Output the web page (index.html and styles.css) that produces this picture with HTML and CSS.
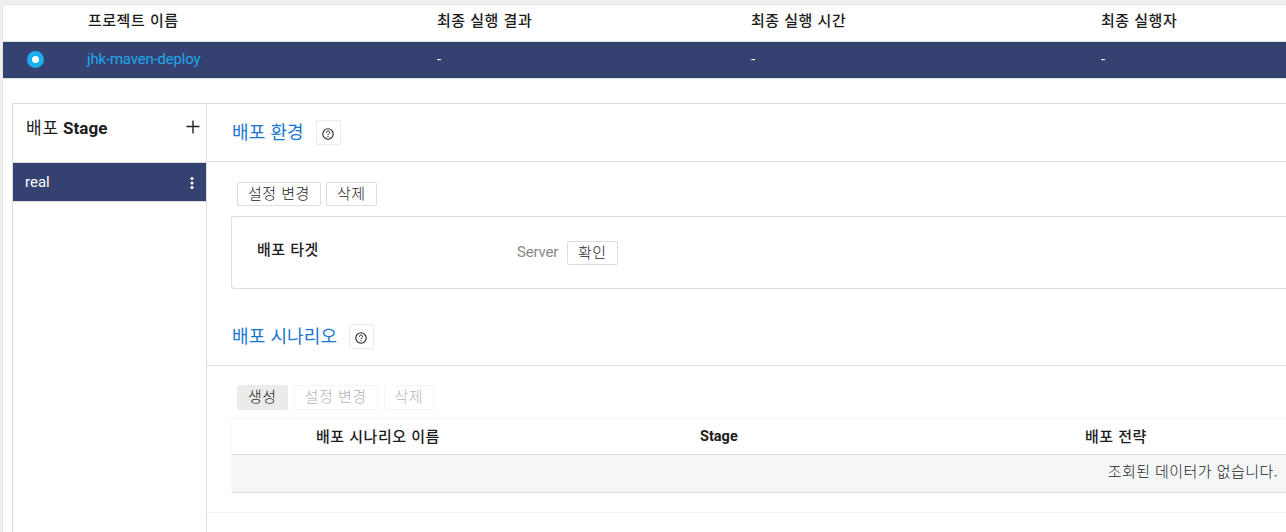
FILE: index.html
```
<!DOCTYPE html>
<html lang="ko">
<head>
<meta charset="utf-8">
<title>배포</title>
<link rel="stylesheet" href="styles.css">
</head>
<body>
<main class="page">
  <section class="projects">
    <div class="project-row project-head">
      <span></span><span class="ko first">프로젝트 이름</span><span class="ko">최종 실행 결과</span><span class="ko">최종 실행 시간</span><span class="ko">최종 실행자</span>
    </div>
    <div class="project-row project-selected">
      <span class="radio"></span><a class="project-link">jhk-maven-deploy</a><span>-</span><span>-</span><span>-</span>
    </div>
  </section>
  <section class="deploy">
    <aside class="stages">
      <header class="stages-head">
        <h2 class="stages-title"><span class="ko">배포</span> Stage</h2>
        <svg class="plus" width="14" height="14" viewBox="0 0 14 14"><path d="M7 .5v13M.5 6.5h13" stroke="#222" stroke-width="1.4" fill="none"/></svg>
      </header>
      <div class="stage">
        <span>real</span>
        <svg width="4" height="14" viewBox="0 0 4 14" fill="#fff"><circle cx="2" cy="2.5" r="1.6"/><circle cx="2" cy="7" r="1.6"/><circle cx="2" cy="11.5" r="1.6"/></svg>
      </div>
    </aside>
    <div class="content">
      <header class="section-head">
        <h3 class="section-title ko">배포 환경</h3>
        <button class="help"><svg width="12" height="12" viewBox="0 0 12 12" fill="none" stroke="#222"><circle cx="6" cy="6" r="5.2" stroke-width="1.1"/><path d="M4.4 4.8C4.4 2.4 7.6 2.5 7.6 4.6C7.6 5.7 6 5.8 6 7.2M6 8.1v1.2" stroke-width="1"/></svg></button>
      </header>
      <div class="section-body environment">
        <div class="toolbar"><button class="btn ko">설정 변경</button><button class="btn ko">삭제</button></div>
        <div class="target">
          <strong class="target-name ko">배포 타겟</strong>
          <span class="target-type">Server</span>
          <button class="btn ko">확인</button>
        </div>
      </div>
      <header class="section-head">
        <h3 class="section-title ko">배포 시나리오</h3>
        <button class="help"><svg width="12" height="12" viewBox="0 0 12 12" fill="none" stroke="#222"><circle cx="6" cy="6" r="5.2" stroke-width="1.1"/><path d="M4.4 4.8C4.4 2.4 7.6 2.5 7.6 4.6C7.6 5.7 6 5.8 6 7.2M6 8.1v1.2" stroke-width="1"/></svg></button>
      </header>
      <div class="section-body scenarios">
        <div class="toolbar"><button class="btn btn-active ko">생성</button><button class="btn btn-disabled ko">설정 변경</button><button class="btn btn-disabled ko">삭제</button></div>
        <div class="table">
          <div class="table-head"><span class="ko">배포 시나리오 이름</span><b>Stage</b><span class="ko">배포 전략</span></div>
          <div class="table-empty ko">조회된 데이터가 없습니다.</div>
        </div>
      </div>
    </div>
  </section>
</main>
</body>
</html>
```
FILE: styles.css
```
* { box-sizing: border-box; }
body {
  margin: 0;
  height: 532px;
  overflow: hidden;
  background: #efefef;
  color: #1c1c1c;
  font: 15px/20px Roboto, "Noto Sans CJK KR", sans-serif;
}
h2, h3 { margin: 0; }
button { font: inherit; color: inherit; padding: 0; }
.ko { font-family: "Noto Sans CJK KR", sans-serif; letter-spacing: .5px; white-space: nowrap; }
.page {
  margin: 4px 0 0 2px;
  height: 530px;
  border: 1px solid #e5e5e5;
  border-right: 0;
  border-radius: 3px 0 0 0;
  background: #fff;
}
.project-row {
  display: grid;
  grid-template-columns: 84px 350px 314px 350px 1fr;
  height: 37px;
  padding-top: 5px;
  border-bottom: 1px solid #e0e0e0;
}
.project-head { font-weight: 500; }
.first { padding-left: 1px; }
.project-selected { background: #354271; color: #fff; padding-top: 7px; }
.project-link { color: #1da6e9; letter-spacing: -.18px; }
.radio {
  width: 17px;
  height: 17px;
  margin: 2px 0 0 24px;
  border: 5px solid #1aaeee;
  border-radius: 50%;
  background: #fff;
}
.deploy {
  display: grid;
  grid-template-columns: 194px 1fr;
  height: 440px;
  margin: 24px 0 0 9px;
  border: 1px solid #dcdcdc;
  border-right: 0;
}
.stages { border-right: 1px solid #dcdcdc; }
.stages-head {
  display: flex;
  justify-content: space-between;
  height: 59px;
  padding: 13px 6px 0 13px;
  border-bottom: 1px solid #e0e0e0;
}
.stages-title { font-size: 17px; font-weight: 700; line-height: 20px; }
.stages-title .ko { font-weight: 400; letter-spacing: .8px; }
.plus { margin-top: 3px; }
.stage {
  display: flex;
  justify-content: space-between;
  height: 39px;
  padding: 9px 12px 0;
  border-bottom: 1px solid #e0e0e0;
  background: #354271;
  color: #fff;
}
.stage svg { margin-top: 4px; }
.content { min-width: 0; }
.section-head {
  display: flex;
  gap: 12px;
  height: 58px;
  padding: 16px 0 0 25px;
  border-bottom: 1px solid #e0e0e0;
}
.section-title { color: #1976d2; font-size: 18px; font-weight: 400; line-height: 22px; letter-spacing: .1px; }
.help {
  display: flex;
  align-items: center;
  justify-content: center;
  width: 25px;
  height: 25px;
  padding-top: 2px;
  border: 1px solid #ebebeb;
  border-radius: 2px;
  background: #fff;
}
.help svg { margin-right: 1px; }
.section-body { padding: 20px 0 0 24px; }
.environment { height: 146px; }
.toolbar { display: flex; gap: 6px; height: 25px; padding-left: 6px; }
.btn {
  height: 25px;
  padding: 0 10px 4px;
  border: 1px solid #dedede;
  border-radius: 2px;
  background: #fff;
  font-weight: 300;
  line-height: 19px;
}
.environment .btn { height: 24px; padding-bottom: 5px; }
.environment .toolbar { gap: 5px; }
.btn-active { background: #ebebeb; border-color: #ebebeb; }
.btn-disabled { color: #b5b5b5; border-color: #f4f4f4; }
.target {
  display: flex;
  height: 73px;
  margin-top: 9px;
  padding: 23px 0 0 25px;
  border: 1px solid #dedede;
  border-right: 0;
  border-radius: 3px 0 0 3px;
}
.target-name { width: 260px; margin-top: -1px; font-weight: 500; }
.target-type { width: 50px; padding-top: 2px; color: #888; letter-spacing: -.2px; }
.target .btn { margin-top: 1px; }
.scenarios { height: 147px; padding-top: 19px; border-bottom: 1px solid #f4f4f4; }
.table { margin-top: 8px; border: 1px solid #f6f6f6; border-right: 0; border-bottom: 0; border-radius: 3px 0 0 0; }
.table-head {
  display: grid;
  grid-template-columns: 384px 385px 1fr;
  height: 36px;
  padding: 7px 0 0 84px;
  border-bottom: 1px solid #dedede;
  font-weight: 500;
}
.table-head b { padding-top: 1px; font-size: 14.5px; }
.table-empty {
  height: 38px;
  padding: 6px 8px 0 0;
  border-bottom: 1px solid #dcdcdc;
  background: #f5f6f8;
  font-weight: 300;
  letter-spacing: .45px;
  text-align: right;
}
```
